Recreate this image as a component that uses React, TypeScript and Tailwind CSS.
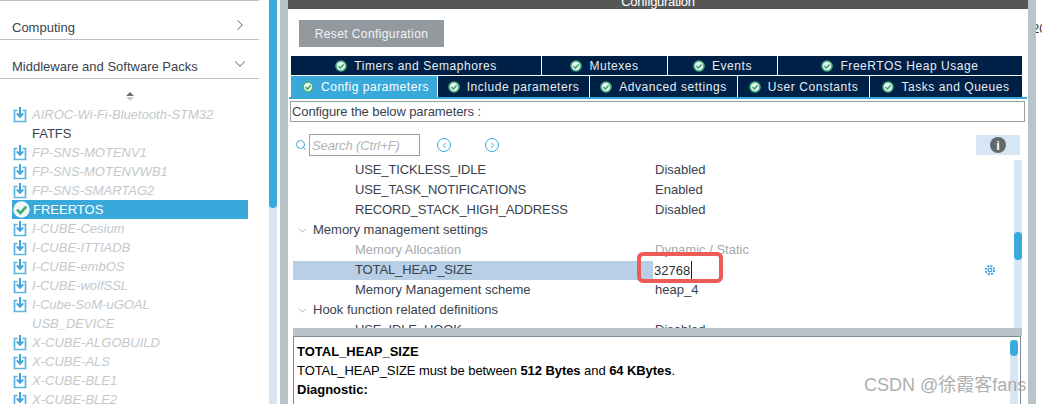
import React from "react";
import { ChevronRight, ChevronDown, Search, ChevronLeft } from "lucide-react";

const FONT = "font-['Liberation_Sans',Arial,sans-serif]";

function PackIcon() {
  return (
    <svg width="14" height="17" viewBox="0 0 14 17" className="shrink-0">
      <path d="M4.5 4.5H1.5V15.5H12.5V4.5H9.5" fill="none" stroke="#5db4e0" strokeWidth="1.7" />
      <path d="M7 1V10M3.8 7.4L7 10.8L10.2 7.4" fill="none" stroke="#3da6dc" strokeWidth="2" />
    </svg>
  );
}

function BigCheck() {
  return (
    <svg width="17" height="17" viewBox="0 0 17 17" className="shrink-0">
      <circle cx="8.5" cy="8.5" r="8.2" fill="#f3f7f5" />
      <path d="M4 8.6L7.4 12L13.2 5.6" fill="none" stroke="#3fae74" strokeWidth="2.6" />
    </svg>
  );
}

function TabCheck() {
  return (
    <svg width="12" height="12" viewBox="0 0 12 12" className="shrink-0">
      <circle cx="6" cy="6" r="5.8" fill="#46ad7f" />
      <circle cx="6" cy="6" r="4.2" fill="#e8f5ef" />
      <path d="M3.4 6L5.4 8L8.7 4.4" fill="none" stroke="#3fa877" strokeWidth="1.6" />
    </svg>
  );
}

function Tab({ label, width, active, grow }: { label: string; width?: string; active?: boolean; grow?: boolean }) {
  return (
    <div
      className={`flex items-center justify-center gap-[7px] text-[12px] tracking-[0.55px] text-[#e8edf2] ${width ?? ""} ${grow ? "flex-1" : ""} ${active ? "bg-[#39a9dc] pl-[3px] tracking-[0.5px] text-white" : "bg-[#002147]"}`}
    >
      <TabCheck />
      <span>{label}</span>
    </div>
  );
}

function PackRow({ label, icon = true, dark }: { label: string; icon?: boolean; dark?: boolean }) {
  return (
    <div className="flex h-[19px] items-center pl-[13px]">
      <div className="w-[19px] shrink-0">{icon && <PackIcon />}</div>
      <span className={`text-[13px] ${dark ? "text-[#39424e]" : "italic text-[#c4c8cc]"}`}>{label}</span>
    </div>
  );
}

function ParamRow({ name, value, muted, caps }: { name: string; value?: string; muted?: boolean; caps?: boolean }) {
  return (
    <div className={`flex h-[20px] items-center text-[13px] ${muted ? "text-[#a6a9ad]" : "text-[#39424e]"}`}>
      <span className={`w-[362px] shrink-0 pl-[62px] ${caps ? "tracking-[-0.12px]" : ""}`}>{name}</span>
      <span>{value}</span>
    </div>
  );
}

function GroupRow({ label }: { label: string }) {
  return (
    <div className="flex h-[20px] items-center text-[13px] text-[#39424e]">
      <ChevronDown size={13} strokeWidth={1.2} className="ml-[3px] mr-[4px] text-[#7d8489]" />
      <span>{label}</span>
    </div>
  );
}

export default function App() {
  return (
    <div className={`relative flex h-[404px] w-[1042px] overflow-hidden bg-white ${FONT}`}>
      {/* Component tree */}
      <aside className="w-[269px] shrink-0">
        <div className="h-px w-[259px] bg-[#b9c4ca]" />
        <div className="flex h-[39px] w-[259px] items-center justify-between border-b border-[#b9c4ca] pl-[12px] pr-[10px] pt-[15px] text-[13px] text-[#39424e]">
          <span>Computing</span>
          <ChevronRight size={18} strokeWidth={1.4} className="mb-[5px] text-[#6f767b]" />
        </div>
        <div className="flex h-[39px] w-[259px] items-center justify-between border-b border-[#b9c4ca] pl-[12px] pr-[10px] pt-[15px] text-[13px] text-[#39424e]">
          <span>Middleware and Software Packs</span>
          <ChevronDown size={18} strokeWidth={1.4} className="mb-[5px] text-[#6f767b]" />
        </div>
        <div className="flex h-[26px] w-[259px] flex-col items-center justify-center pt-[8px]">
          <div className="h-0 w-0 border-x-[4px] border-b-[4px] border-x-transparent border-b-[#6a6f73]" />
          <div className="mt-px h-0 w-0 border-x-[4px] border-t-[4px] border-x-transparent border-t-[#c8cbce]" />
        </div>
        <div className="w-[248px]">
          <PackRow label="AIROC-Wi-Fi-Bluetooth-STM32" />
          <PackRow label="FATFS" icon={false} dark />
          <PackRow label="FP-SNS-MOTENV1" />
          <PackRow label="FP-SNS-MOTENVWB1" />
          <PackRow label="FP-SNS-SMARTAG2" />
          <div className="ml-[12px] flex h-[19px] items-center bg-[#39a9dc] pl-[1px]">
            <div className="w-[20px]"><BigCheck /></div>
            <span className="text-[13px] text-white">FREERTOS</span>
          </div>
          <PackRow label="I-CUBE-Cesium" />
          <PackRow label="I-CUBE-ITTIADB" />
          <PackRow label="I-CUBE-embOS" />
          <PackRow label="I-CUBE-wolfSSL" />
          <PackRow label="I-Cube-SoM-uGOAL" />
          <PackRow label="USB_DEVICE" icon={false} />
          <PackRow label="X-CUBE-ALGOBUILD" />
          <PackRow label="X-CUBE-ALS" />
          <PackRow label="X-CUBE-BLE1" />
          <PackRow label="X-CUBE-BLE2" />
        </div>
      </aside>

      {/* Tree scrollbar */}
      <div className="h-full w-[8px] shrink-0 bg-[#d6e6f5]">
        <div className="h-[208px] rounded-b-[4px] bg-[#39a9dc]" />
      </div>
      <div className="w-[3px] shrink-0" />
      <div className="w-[8px] shrink-0 bg-[#b9c4ca]" />

      {/* Configuration panel */}
      <main className="flex w-[740px] shrink-0 flex-col">
        <div className="flex h-[9px] shrink-0 items-end justify-center overflow-hidden bg-[#555757]">
          <span className="text-[13px] leading-[15px] tracking-[-0.3px] text-white">Configuration</span>
        </div>
        <div className="ml-[11px] mt-[11px] flex h-[27px] w-[145px] shrink-0 items-center justify-center bg-[#92999f] text-[12px] tracking-[0.4px] text-[#f2f4f5]">
          Reset Configuration
        </div>
        <div className="ml-[3px] mt-[9px] flex h-[19px] w-[731px] shrink-0 gap-px">
          <Tab label="Timers and Semaphores" width="w-[250px]" />
          <Tab label="Mutexes" width="w-[125px]" />
          <Tab label="Events" width="w-[109px]" />
          <Tab label="FreeRTOS Heap Usage" grow />
        </div>
        <div className="ml-[3px] mt-px flex h-[21px] w-[731px] shrink-0 gap-px">
          <Tab label="Config parameters" width="w-[146px]" active />
          <Tab label="Include parameters" width="w-[151px]" />
          <Tab label="Advanced settings" width="w-[147px]" />
          <Tab label="User Constants" width="w-[131px]" />
          <Tab label="Tasks and Queues" grow />
        </div>
        <div className="ml-px h-[2px] w-[738px] shrink-0 bg-[#39a9dc]" />
        <div className="ml-[2px] mt-[2px] flex h-[21px] w-[735px] shrink-0 items-center border border-[#9a9fa3] pl-px text-[13px] tracking-[-0.1px] text-[#39424e]">
          Configure the below parameters :
        </div>

        {/* Search strip */}
        <div className="ml-[7px] mt-[12px] flex h-[22px] w-[725px] shrink-0 items-center">
          <Search size={12} strokeWidth={2} className="text-[#39a9dc]" />
          <div className="ml-[2px] flex h-[22px] w-[111px] items-center border border-[#9a9fa3] pl-[2px] pt-px text-[13px] italic tracking-[-0.1px] text-[#b0b4b8]">
            Search (Ctrl+F)
          </div>
          <div className="ml-[17px] flex h-[14px] w-[14px] items-center justify-center rounded-full border border-[#39a9dc]">
            <ChevronLeft size={9} strokeWidth={2.5} className="text-[#39a9dc]" />
          </div>
          <div className="ml-[34px] flex h-[14px] w-[14px] items-center justify-center rounded-full border border-[#39a9dc]">
            <ChevronRight size={9} strokeWidth={2.5} className="text-[#39a9dc]" />
          </div>
          <div className="ml-auto flex h-[20px] w-[44px] items-center justify-center bg-[#d6e6f5]">
            <div className="flex h-[16px] w-[16px] items-center justify-center rounded-full bg-[#63686b] text-[13px] font-bold leading-none text-white">i</div>
          </div>
        </div>

        {/* Parameter table */}
        <div className="ml-[5px] mt-[4px] flex h-[168px] w-[729px] shrink-0 overflow-hidden">
          <div className="w-[721px] shrink-0">
            <ParamRow name="USE_TICKLESS_IDLE" value="Disabled" caps />
            <ParamRow name="USE_TASK_NOTIFICATIONS" value="Enabled" caps />
            <ParamRow name="RECORD_STACK_HIGH_ADDRESS" value="Disabled" caps />
            <GroupRow label="Memory management settings" />
            <ParamRow name="Memory Allocation" value="Dynamic / Static" muted />
            <div className="flex h-[20px] items-center text-[13px] text-[#39424e]">
              <div className="flex h-[19px] w-[360px] shrink-0 items-center bg-[#b8cfe6] pl-[62px] tracking-[-0.12px]">TOTAL_HEAP_SIZE</div>
              <span className="ml-[1px] flex-none border-r border-[#222] pr-px leading-[19px] text-[#2d3339]">32768</span>
              <svg width="12" height="12" viewBox="0 0 13 13" className="ml-[292px] text-[#2f9fdc]">
                <circle cx="6.5" cy="6.5" r="2" fill="none" stroke="currentColor" strokeWidth="1.2" />
                <circle cx="6.5" cy="6.5" r="4.6" fill="none" stroke="currentColor" strokeWidth="1.9" strokeDasharray="2.2 1.4" />
              </svg>
            </div>
            <ParamRow name="Memory Management scheme" value="heap_4" />
            <GroupRow label="Hook function related definitions" />
            <ParamRow name="USE_IDLE_HOOK" value="Disabled" caps />
          </div>
          <div className="relative w-[8px] shrink-0 bg-[#d6e6f5]">
            <div className="absolute left-0 top-[72px] h-[28px] w-[8px] rounded-[4px] bg-[#39a9dc]" />
          </div>
        </div>

        {/* Splitter */}
        <div className="ml-[5px] h-[8px] w-[729px] shrink-0 bg-[#b9c4ca]" />

        {/* Details pane */}
        <div className="ml-[5px] flex h-[80px] w-[728px] shrink-0 border border-[#7a8a99] pl-[3px] text-[13px] text-black">
          <div className="w-[713px] shrink-0 pt-[5px] leading-[19px]">
            <div className="font-bold">TOTAL_HEAP_SIZE</div>
            <div className="tracking-[-0.07px]">
              TOTAL_HEAP_SIZE must be between <b>512 Bytes</b> and <b>64 KBytes</b>.
            </div>
            <div className="font-bold">Diagnostic:</div>
          </div>
          <div className="mt-[3px] w-[8px] shrink-0 bg-[#d6e6f5]">
            <div className="h-[16px] rounded-[4px] bg-[#39a9dc]" />
          </div>
        </div>
      </main>

      <div className="w-[8px] shrink-0 bg-[#b9c4ca]" />
      <div className="relative flex-1 overflow-hidden">
        <span className="absolute left-[-4px] top-[19px] text-[13px] text-[#333]">20</span>
      </div>

      {/* Callout around the edited value */}
      <div className="absolute left-[637px] top-[252px] h-[31px] w-[86px] rounded-[6px] border-[4px] border-[#ee5a56]" />

      {/* Watermark */}
      <div className="absolute left-[864px] top-[375px] font-['Liberation_Sans','Noto_Sans_CJK_SC',sans-serif] text-[18px] leading-[20px] text-[#9a9a9a] opacity-80">
        CSDN @徐霞客fans
      </div>
    </div>
  );
}
